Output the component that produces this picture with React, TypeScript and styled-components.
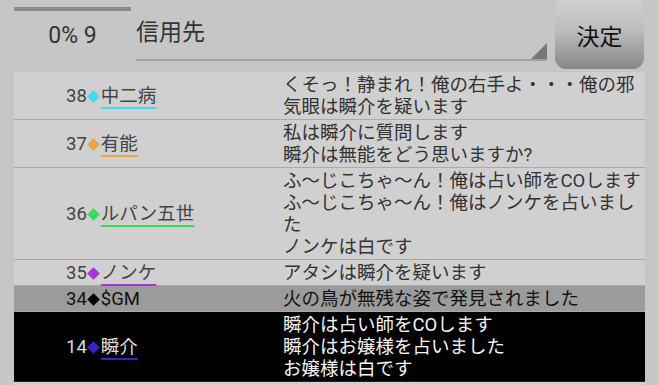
import React from "react";
import styled, { createGlobalStyle } from "styled-components";

const GlobalStyle = createGlobalStyle`
  html, body {
    margin: 0;
    padding: 0;
    background: #c6c6c6;
  }
  body {
    font-family: Roboto, "Noto Sans CJK JP", sans-serif;
  }
`;

type Tone = "normal" | "gm" | "self";

interface Entry {
  no: number;
  name: string;
  color: string;
  lines: string[];
  tone: Tone;
}

const entries: Entry[] = [
  {
    no: 38,
    name: "中二病",
    color: "#3ddcef",
    lines: ["くそっ！静まれ！俺の右手よ・・・俺の邪気眼は瞬介を疑います"],
    tone: "normal",
  },
  {
    no: 37,
    name: "有能",
    color: "#f0a53a",
    lines: ["私は瞬介に質問します", "瞬介は無能をどう思いますか?"],
    tone: "normal",
  },
  {
    no: 36,
    name: "ルパン五世",
    color: "#35dc5a",
    lines: [
      "ふ〜じこちゃ〜ん！俺は占い師をCOします",
      "ふ〜じこちゃ〜ん！俺はノンケを占いました",
      "ノンケは白です",
    ],
    tone: "normal",
  },
  {
    no: 35,
    name: "ノンケ",
    color: "#a634d8",
    lines: ["アタシは瞬介を疑います"],
    tone: "normal",
  },
  {
    no: 34,
    name: "$GM",
    color: "#000000",
    lines: ["火の鳥が無残な姿で発見されました"],
    tone: "gm",
  },
  {
    no: 14,
    name: "瞬介",
    color: "#3a22c4",
    lines: ["瞬介は占い師をCOします", "瞬介はお嬢様を占いました", "お嬢様は白です"],
    tone: "self",
  },
];

const Screen = styled.div`
  width: 659px;
  height: 385px;
  overflow: hidden;
  background: #c6c6c6;
  display: flex;
  flex-direction: column;
`;

const Header = styled.div`
  height: 72px;
  flex: none;
  display: flex;
  padding-left: 14px;
  box-sizing: border-box;
`;

const Counter = styled.div`
  width: 117px;
  height: 40px;
  margin-top: 7px;
  border-top: 4px solid #8a8a8a;
  display: flex;
  justify-content: center;
  padding-top: 13px;
  font-size: 23px;
  color: #333;
  line-height: 1;
`;

const Picker = styled.div`
  position: relative;
  margin-left: 5px;
  width: 411px;
  height: 61px;
  border-bottom: 2px solid #a2a2a2;
  box-sizing: border-box;
  padding-top: 19px;
  font-size: 23px;
  color: #333;
  line-height: 1.2;
`;

const Corner = styled.span`
  position: absolute;
  right: 0;
  bottom: 0;
  width: 0;
  height: 0;
  border-left: 16px solid transparent;
  border-bottom: 16px solid #777;
`;

const Decide = styled.button`
  margin-left: 8px;
  margin-top: -2px;
  width: 89px;
  height: 71px;
  border: none;
  border-radius: 11px;
  background: linear-gradient(#d2d2d2 0%, #bdbdbd 45%, #878787 100%);
  font-family: Roboto, "Noto Sans CJK JP", sans-serif;
  font-size: 23px;
  color: #111;
  padding: 0;
  padding-top: 2px;
`;

const List = styled.div`
  margin-left: 14px;
  width: 631px;
  flex: 1;
  background: #d0d0d0;
`;

const Row = styled.div<{ $tone: Tone }>`
  display: grid;
  grid-template-columns: 269px 1fr;
  padding: 2px 0 1px;
  border-bottom: 1px solid ${(p) => (p.$tone === "self" ? "#222" : "#aaa")};
  background: ${(p) =>
    p.$tone === "gm" ? "#9b9b9b" : p.$tone === "self" ? "#000" : "#d0d0d0"};
  color: ${(p) =>
    p.$tone === "gm" ? "#111" : p.$tone === "self" ? "#f4f4f4" : "#333"};
  font-size: 18.5px;
  line-height: 22px;
`;

const Who = styled.div<{ $tone: Tone }>`
  display: flex;
  align-items: center;
  padding-left: 52px;
  color: ${(p) =>
    p.$tone === "gm" ? "#111" : p.$tone === "self" ? "#dcdcdc" : "#444"};
`;

const Diamond = styled.span<{ $color: string }>`
  display: inline-block;
  width: 9px;
  height: 9px;
  margin: 0 2px 0 2px;
  background: ${(p) => p.$color};
  transform: rotate(45deg);
`;

const Name = styled.span<{ $color: string; $plain: boolean }>`
  margin-left: 1px;
  text-decoration: ${(p) => (p.$plain ? "none" : "underline")};
  text-decoration-color: ${(p) => p.$color};
  text-decoration-thickness: 2px;
  text-underline-offset: 5px;
`;

const Message = styled.div`
  word-break: break-all;
`;

const Line = styled.div``;

export default function App() {
  return (
    <>
      <GlobalStyle />
      <Screen>
        <Header>
          <Counter>0% 9</Counter>
          <Picker>
            信用先
            <Corner />
          </Picker>
          <Decide>決定</Decide>
        </Header>
        <List>
          {entries.map((e) => (
            <Row key={e.no} $tone={e.tone}>
              <Who $tone={e.tone}>
                {e.no}
                <Diamond $color={e.color} />
                <Name $color={e.color} $plain={e.tone === "gm"}>
                  {e.name}
                </Name>
              </Who>
              <Message>
                {e.lines.map((l, i) => (
                  <Line key={i}>{l}</Line>
                ))}
              </Message>
            </Row>
          ))}
        </List>
      </Screen>
    </>
  );
}
